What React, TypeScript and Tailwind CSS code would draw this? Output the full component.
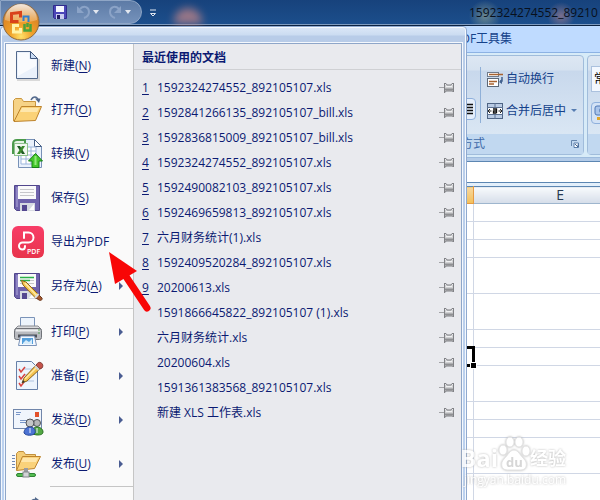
import React from 'react'

interface MenuItem {
  label: string
  accessKey?: string
  icon: React.ReactNode
  hasSubmenu?: boolean
  separated?: boolean
}

interface RecentFile {
  index?: string
  name: string
}

const NewIcon = () => (
  <svg className="h-8 w-8 shrink-0" viewBox="0 0 32 32">
    <path d="M5 30h22V9" fill="none" stroke="#d9d9d9" strokeWidth="2" />
    <path d="M4.500 1.500h14l7 7v20h-21z" fill="#eaf1fb" stroke="#53698c" />
    <path d="M18.500 1.500v7h7z" fill="#c9dbf3" stroke="#3f567c" />
    <path d="M6 3h11v6l7 1v6L6 26z" fill="#fff" opacity=".7" />
  </svg>
)

const OpenIcon = () => (
  <svg className="h-8 w-8 shrink-0" viewBox="0 0 32 32">
    <path d="M1.500 27V6.500l2-2h6l2 3h12v5" fill="#f6d387" stroke="#c9963f" />
    <path d="M2 27.500L9.500 12.500h20L23.500 26.500z" fill="#fbd277" stroke="#bd832c" />
    <path d="M10 14h17l-2 4H8z" fill="#fee7ad" />
    <path d="M19 6c2-4 6-4 7 0" fill="none" stroke="#53698c" strokeWidth="1.500" />
    <path d="M23 4.500h5.500L27 9z" fill="#53698c" />
  </svg>
)

const ConvertIcon = () => (
  <svg className="h-8 w-8 shrink-0" viewBox="0 0 32 32">
    <path d="M6.500 1.500h16l7 7v21h-23z" fill="#e9f1fc" stroke="#7791b7" />
    <path d="M22.500 1.500v7h7z" fill="#fff" stroke="#465f87" />
    <path d="M9 9h15v17H9zM9 13h15M9 17h15M9 21h15M14 9v17M19 9v17" fill="#fff" stroke="#9db6dc" />
    <path d="M1 16V6c0-3 2-4 4-4h8v4" fill="#e6f3e5" stroke="#4b9a4b" strokeWidth="2" />
    <rect x="2.500" y="5.500" width="13" height="12" fill="#f2f8f0" stroke="#8fc18d" />
    <path d="M5 8h3l5 8h-3z" fill="#1f5d24" />
    <path d="M13 8h-3l-5 8h3z" fill="#3b8a2c" />
    <path d="M23.500 15.500l7 7.500h-3.500v6.500h-7V23h-3.500z" fill="#44c72b" stroke="#178015" />
    <path d="M23.500 18v9" stroke="#91e97a" strokeWidth="2" />
  </svg>
)

const DiskShape = () => (
  <>
    <path d="M2.500 3.500h25v25h-23l-2-2z" fill="#6f63ac" stroke="#51468c" />
    <path d="M5 5v20" stroke="#9087c4" strokeWidth="2" />
    <rect x="6" y="4" width="18" height="13" fill="#fafafa" />
    <path d="M8 7.500h14M8 10.500h14M8 13.500h14" stroke="#c7c7cb" />
    <path d="M8 29v-8h15v8z" fill="#d7dae2" />
    <path d="M10 29v-6h5v6z" fill="#544790" />
    <path d="M17 28l5-6v6z" fill="#fff" />
  </>
)

const SaveIcon = () => (
  <svg className="h-8 w-8 shrink-0" viewBox="0 0 32 32">
    <DiskShape />
  </svg>
)

const SaveAsIcon = () => (
  <svg className="h-8 w-8 shrink-0" viewBox="0 0 32 32">
    <DiskShape />
    <path d="M8 7.500h14M8 10.500h10" stroke="#2bb04a" strokeWidth="1.500" />
    <path d="M9.500 10.500l4.500 1.500 13 13-3 3.500L11 15z" fill="#f3c54f" stroke="#8f6519" />
    <path d="M13 13l12 13" stroke="#fdebaa" strokeWidth="1.500" />
    <path d="M27 25l3 3c1 2-2 3-3 2l-3-2z" fill="#a3572e" stroke="#6e3b1f" />
    <path d="M26.500 24L23 28" stroke="#ddd" strokeWidth="2" />
  </svg>
)

const PdfIcon = () => (
  <svg className="h-8 w-8 shrink-0" viewBox="0 0 32 32">
    <defs>
      <linearGradient id="pdfFill" x1="0" y1="0" x2="0" y2="1">
        <stop offset="0" stopColor="#f83d68" />
        <stop offset="1" stopColor="#e8344b" />
      </linearGradient>
    </defs>
    <rect width="32" height="32" rx="6" fill="url(#pdfFill)" />
    <path
      d="M12 12V6.500h4.500a5 5 0 0 1 0 10H10.500a3.500 3.500 0 0 0 0 7c2 0 2.500-1.500 2.500-3.500"
      fill="none"
      stroke="#fff"
      strokeWidth="2"
      strokeLinecap="round"
    />
    <text x="15" y="28" fill="#fff" fontSize="7" fontWeight="600" fontFamily="Open Sans, sans-serif">PDF</text>
  </svg>
)

const PrintIcon = () => (
  <svg className="h-8 w-8 shrink-0" viewBox="0 0 32 32">
    <path d="M8.500 13V1.500h14V13" fill="#edf4fc" stroke="#7a93b8" />
    <path d="M3 13l3-3h20l3 3z" fill="#d9dadd" stroke="#8a8c92" />
    <rect x="2.500" y="12.500" width="27" height="11" rx="2" fill="#b9bbc0" stroke="#6f7278" />
    <path d="M4 14.500h24" stroke="#eeeff1" strokeWidth="2" />
    <path d="M6 20h19" stroke="#4d5057" strokeWidth="3" />
    <path d="M26 14h2M26 17h2" stroke="#56a356" />
    <path d="M8.500 20h14l2 9.500h-18z" fill="#f3f8ff" stroke="#7a93b8" />
    <rect x="10" y="22" width="11" height="6" fill="#54a0dd" />
    <path d="M11 27l3-3 3 2 3-3v5h-9z" fill="#d6ecfb" />
  </svg>
)

const PrepareIcon = () => (
  <svg className="h-8 w-8 shrink-0" viewBox="0 0 32 32">
    <path d="M4.500 1.500h15l6 6v22h-21z" fill="#edf4fc" stroke="#6680a8" />
    <path d="M12 9h10M13 15h9M13 21h9" stroke="#afc3df" />
    <path d="M7 9l2 3 4-5M7 16l2 3 4-5M7 23l2 3 3-4" fill="none" stroke="#d8433e" strokeWidth="1.500" />
    <path d="M10 23l2-5L25 4l4 4-14 13z" fill="#f5c451" stroke="#8d641b" />
    <path d="M13 19L26 6" stroke="#ffe9a5" strokeWidth="1.500" />
    <path d="M25 4c2-4 8 0 5 4l-2 1-4-4z" fill="#c5534b" stroke="#84403a" />
    <path d="M23 6l4 4" stroke="#cfd2d6" strokeWidth="2" />
    <path d="M10 23l1-3 2 2z" fill="#333" />
  </svg>
)

const SendIcon = () => (
  <svg className="h-8 w-8 shrink-0" viewBox="0 0 32 32">
    <rect x="1.500" y="5.500" width="28" height="19" fill="#f0f5fc" stroke="#7186aa" />
    <path d="M4 8.500h5M4 10.500h4M8 16.500h8M8 18.500h6" stroke="#7996c8" />
    <rect x="23" y="8" width="4" height="5" fill="#e2512b" />
    <circle cx="25" cy="19" r="3.500" fill="#b5b6b8" stroke="#505358" />
    <path d="M20 30c0-5 2-7 5-7s6 2 6 5-4 3-6 3z" fill="#53a843" stroke="#2c7425" />
    <circle cx="18" cy="19" r="4" fill="#c5c6c8" stroke="#505358" />
    <path d="M12 29c0-4 3-6 6-6s6 2 5 6c-2 3-9 3-11 0z" fill="#4c73d3" stroke="#274799" />
    <path d="M18 24v5M25 24v5" stroke="#eef3ff" />
  </svg>
)

const PublishIcon = () => (
  <svg className="h-8 w-8 shrink-0" viewBox="0 0 32 32">
    <path d="M0 7.500h3M0 10.500h3M0 13.500h3M0 16.500h3M0 19.500h3" stroke="#7188b4" />
    <path d="M4.500 22V5.500l2-2h5l2 3h10v4" fill="#f4cd78" stroke="#c2903d" />
    <path d="M4.500 22.500l6-14h18l-6 12z" fill="#fad27a" stroke="#bd832c" />
    <path d="M11 10h15l-2 4H9z" fill="#ffe6aa" />
    <path d="M14 20v6" stroke="#989ba0" strokeWidth="4" />
    <rect x="4.500" y="25.500" width="19" height="3" rx="1.500" fill="#52bd4f" stroke="#318336" />
    <rect x="11" y="24" width="6" height="5" fill="#d2d4d7" stroke="#84878c" />
  </svg>
)

const CloseIcon = () => (
  <svg className="h-8 w-8 shrink-0" viewBox="0 0 32 32">
    <path d="M19 10c0-3 2-5 5-4" fill="none" stroke="#53698c" strokeWidth="2" />
    <path d="M23 3l4 3-4 4z" fill="#53698c" />
    <path d="M3 14h18v14H3z" fill="#f6d387" stroke="#c9963f" />
  </svg>
)

const PinIcon = () => (
  <svg className="h-3 w-4" viewBox="0 0 16 12">
    <path d="M0 5.500h5" stroke="#a2a3a6" />
    <rect x="6" y="3" width="8" height="6" fill="#cfd0d2" />
    <path d="M7 4.500h6" stroke="#f1f1f2" />
    <path d="M6 7.500h8" stroke="#8f9093" strokeWidth="2" />
    <path d="M5.500 1v10M14.500 1v9" stroke="#808185" />
    <path d="M6 1.500h1l1 1.500h4l1-1.500h1M6 10.500l1-1.500h6l1 .500" fill="none" stroke="#808185" />
  </svg>
)

const DropArrow = () => (
  <svg className="h-1 w-1.5 shrink-0" viewBox="0 0 6 4"><path d="M0 0h6L3 4z" fill="#e2e7ef" /></svg>
)

const menuItems: MenuItem[] = [
  { label: '新建', accessKey: 'N', icon: <NewIcon /> },
  { label: '打开', accessKey: 'O', icon: <OpenIcon /> },
  { label: '转换', accessKey: 'V', icon: <ConvertIcon /> },
  { label: '保存', accessKey: 'S', icon: <SaveIcon /> },
  { label: '导出为PDF', icon: <PdfIcon /> },
  { label: '另存为', accessKey: 'A', icon: <SaveAsIcon />, hasSubmenu: true },
  { label: '打印', accessKey: 'P', icon: <PrintIcon />, hasSubmenu: true, separated: true },
  { label: '准备', accessKey: 'E', icon: <PrepareIcon />, hasSubmenu: true },
  { label: '发送', accessKey: 'D', icon: <SendIcon />, hasSubmenu: true },
  { label: '发布', accessKey: 'U', icon: <PublishIcon />, hasSubmenu: true }
]

const recentFiles: RecentFile[] = [
  { index: '1', name: '1592324274552_892105107.xls' },
  { index: '2', name: '1592841266135_892105107_bill.xls' },
  { index: '3', name: '1592836815009_892105107_bill.xls' },
  { index: '4', name: '1592324274552_892105107.xls' },
  { index: '5', name: '1592490082103_892105107.xls' },
  { index: '6', name: '1592469659813_892105107.xls' },
  { index: '7', name: '六月财务统计(1).xls' },
  { index: '8', name: '1592409520284_892105107.xls' },
  { index: '9', name: '20200613.xls' },
  { name: '1591866645822_892105107 (1).xls' },
  { name: '六月财务统计.xls' },
  { name: '20200604.xls' },
  { name: '1591361383568_892105107.xls' },
  { name: '新建 XLS 工作表.xls' }
]

const sheetRows = [
  { id: 1, tall: false },
  { id: 2, tall: false },
  { id: 3, tall: false },
  { id: 4, tall: true },
  { id: 5, tall: true },
  { id: 6, tall: false },
  { id: 7, tall: false, active: true },
  { id: 8, tall: true },
  { id: 9, tall: false },
  { id: 10, tall: false },
  { id: 11, tall: true },
  { id: 12, tall: true }
]

const TitleBar = () => (
  <header className="flex h-[26px] shrink-0 items-start border-b border-[#0c2240] bg-linear-to-b from-[#17427c] to-[#1c4f8c] shadow-[inset_0_-1px_0_#7f9cc0]">
    <div className="flex h-6 w-[142px] items-center gap-2 rounded-r-full border border-[#8fa6c6] bg-linear-to-b from-[#5d7ba6] to-[#7592bb] pl-[51px]">
      <button aria-label="保存" className="h-4 w-4">
        <svg className="h-4 w-4" viewBox="0 0 16 16">
          <path d="M1.500 1.500h13v13h-12l-1-1z" fill="#4b46b8" stroke="#302b8c" />
          <path d="M4 2h8v6H4z" fill="#f4f6ff" />
          <path d="M4 10h8v5H4z" fill="#c9cdf0" />
          <path d="M5 11h3v4H5z" fill="#221d66" />
        </svg>
      </button>
      <button aria-label="撤消" className="flex h-4 w-6 items-center gap-px">
        <svg className="h-4 w-4 shrink-0" viewBox="0 0 16 16">
          <path d="M4 5c4-4 9-2 9 3 0 3-2 5-5 6" fill="none" stroke="#8ba3c7" strokeWidth="2" />
          <path d="M1 2v7h7z" fill="#8ba3c7" />
        </svg>
        <DropArrow />
      </button>
      <button aria-label="恢复" className="flex h-4 w-6 items-center gap-px">
        <svg className="h-4 w-4 shrink-0" viewBox="0 0 16 16">
          <path d="M11 5C7 1 2 3 2 8c0 3 2 5 5 6" fill="none" stroke="#8ba3c7" strokeWidth="2" />
          <path d="M13 2v7H6z" fill="#8ba3c7" />
        </svg>
        <DropArrow />
      </button>
    </div>
    <button aria-label="自定义快速访问工具栏" className="ml-2 flex h-[26px] w-4 items-center">
      <svg className="h-2 w-1.5" viewBox="0 0 6 8"><path d="M0 1h6M.500 4.500h5L3 7z" fill="none" stroke="#dfe6f0" /></svg>
    </button>
    <div className="mt-2 ml-2 h-4 w-7 rounded-t-full bg-[#d08a88] opacity-70 blur-xs" />
    <h1 className="ml-auto w-[131px] shrink-0 bg-[radial-gradient(circle_at_16px_16px,#8fa394aa,transparent_16px),radial-gradient(circle_at_92px_16px,#a8808faa,transparent_14px)] pt-1 pb-0.5 leading-[18px] whitespace-nowrap text-[#08101c]">
      1592324274552_89210
    </h1>
  </header>
)

const Ribbon = () => (
  <section className="shrink-0">
    <nav className="flex h-[27px] items-center border-b border-[#8db2e3] bg-[#bfdbff] pl-[454px]">
      <a href="#pdf-tools" className="whitespace-nowrap text-[#15428b]">PDF工具集</a>
    </nav>
    <div className="flex h-[105px] gap-[3px] overflow-hidden border-b border-[#9dbbdd] bg-[#d7ebf8] pt-0.5 pb-0.5">
      <div className="flex w-[584px] shrink-0 flex-col rounded-sm border border-[#a0bcdb] bg-[linear-gradient(#dde7f3,#d6e2f0_14px,#c8d8ec_15px,#dfebf6)]">
        <div className="flex flex-1 items-center justify-end pr-[6px]">
          <button aria-label="文本右对齐" className="mt-7 flex h-[22px] w-[22px] items-center justify-end rounded-sm border border-[#8fb0dc] bg-[#e4eefb] pr-0.5">
            <svg className="h-3 w-4" viewBox="0 0 16 12"><path d="M2 1.500h14M6 4.500h10M2 7.500h14M6 10.500h10" stroke="#111" strokeWidth="1.500" /></svg>
          </button>
          <div className="ml-1 h-14 w-px bg-[#8fb0d8]" />
          <div className="ml-1.5 flex flex-col gap-2">
            <button className="flex h-6 items-center gap-[3px] text-[#15428b]">
              <svg className="h-4 w-4" viewBox="0 0 16 16">
                <rect x=".5" y="1.500" width="11" height="4" fill="#fff" stroke="#707b8b" />
                <path d="M2 3.500h14" stroke="#a86330" strokeWidth="1.500" />
                <rect x=".5" y="7.500" width="11" height="8" fill="#fff" stroke="#5c6878" />
                <path d="M2 10.500h8M2 13h5" stroke="#a86330" strokeWidth="1.500" />
                <path d="M15 6v4h-2" fill="none" stroke="#42628f" strokeWidth="1.500" />
                <path d="M15 8v5l-3-2z" fill="#42628f" />
              </svg>
              自动换行
            </button>
            <button className="flex h-6 items-center gap-[3px] text-[#15428b]">
              <svg className="h-4 w-4" viewBox="0 0 16 16">
                <rect x=".5" y=".5" width="15" height="15" fill="#b9cbe4" stroke="#4f6585" />
                <path d="M8 0v4M8 12v4M0 4.500h16M0 11.500h16" stroke="#5c7293" />
                <rect x="1" y="5" width="14" height="6" fill="#fff" />
                <path d="M1 8h3.500M11.500 8H15M3 6L1 8l2 2M13 6l2 2-2 2" fill="none" stroke="#222" />
                <path d="M6 6h3.500v4M9.500 8h-3v2h3" fill="none" stroke="#111" strokeWidth="1.300" />
              </svg>
              合并后居中
              <svg className="ml-0.5 h-1 w-1.5" viewBox="0 0 6 4"><path d="M0 0h6L3 3z" fill="#567db1" /></svg>
            </button>
          </div>
        </div>
        <div className="flex h-5 items-center justify-end gap-[86px] bg-[#c1d8f0] pr-1">
          <span className="text-[#3e6aaa]">对齐方式</span>
          <button aria-label="对齐方式设置">
            <svg className="h-2 w-2" viewBox="0 0 8 8">
              <path d="M.5 6V.5H6" fill="none" stroke="#6686ac" />
              <path d="M3 3h4.500v4.500H3z" fill="#fff" stroke="#5a7da8" />
              <path d="M4 4l3 3V4.500" fill="none" stroke="#426796" />
            </svg>
          </button>
        </div>
      </div>
      <div className="flex w-40 shrink-0 flex-col rounded-sm border border-[#a0bcdb] bg-[linear-gradient(#dde7f3,#d6e2f0_14px,#c8d8ec_15px,#dfebf6)]">
        <div className="flex flex-1 flex-col gap-2.5 pt-2.5 pl-[3px]">
          <select aria-label="数字格式" className="h-[26px] w-32 shrink-0 appearance-none border border-[#abc1de] bg-[#f3f8ff] pl-0.5 text-black">
            <option>常规</option>
          </select>
          <button aria-label="会计数字格式" className="h-[22px] w-9 shrink-0 rounded-sm border border-[#8fb0dc] bg-[#d3e2f5] pl-0.5">
            <svg className="h-4 w-4" viewBox="0 0 16 16">
              <rect x="1" y="1" width="14" height="9" rx="2" fill="#a9c4ea" stroke="#4e76b4" />
              <circle cx="8" cy="5.500" r="2.500" fill="#e9f1fc" stroke="#4e76b4" />
              <path d="M3 13.500h11" stroke="#e2a526" strokeWidth="3" />
            </svg>
          </button>
        </div>
        <div className="h-5 bg-[#c1d8f0]" />
      </div>
    </div>
  </section>
)

const Sheet = () => (
  <section className="flex-1 overflow-hidden bg-white">
    <div className="h-[3px] bg-[#b3cbe8]" />
    <input aria-label="编辑栏" className="block h-[22px] w-full border-y border-[#5c86b2] bg-white pl-[480px] outline-none" />
    <div className="h-[3px] bg-[#e3effb]" />
    <table className="w-[647px] table-fixed border-collapse">
      <colgroup>
        <col className="w-[473px]" />
        <col />
      </colgroup>
      <thead>
        <tr className="h-[17px]">
          <th aria-label="D" className="border-t border-r border-b border-t-[#5c86b2] border-r-[#e59a43] border-b-[#e59a43] bg-linear-to-b from-[#f8d79c] to-[#f2bf58] p-0" />
          <th className="border-t border-b border-t-[#5c86b2] border-b-[#9eb6ce] bg-linear-to-b from-[#f8fafc] to-[#d5dde9] p-0 text-sm leading-4 font-normal text-[#25384f]">E</th>
        </tr>
      </thead>
      <tbody>
        {sheetRows.map(row => (
          <tr key={row.id} className={row.tall ? 'h-9' : 'h-[18px]'}>
            <td className="relative border-r border-b border-[#d0d7e5] p-0">
              {row.active && (
                <>
                  <div className="absolute -inset-y-0.5 -right-0.5 left-0 border-[3px] border-black" />
                  <div className="absolute -right-[3px] -bottom-[3px] h-[5px] w-[5px] bg-black outline outline-white" />
                </>
              )}
            </td>
            <td className="border-b border-[#d0d7e5] p-0" />
          </tr>
        ))}
      </tbody>
    </table>
  </section>
)

const OfficeMenu = () => (
  <div className="absolute top-[26px] left-0 w-[467px] rounded-t-sm border border-[#8fa9cf] bg-[linear-gradient(#dce8f7,#cbdcf1_8px,#b8cce8_9px,#bcd2f0)] p-1 pt-4 shadow-[inset_0_0_0_1px_#f4f8fd]">
    <div className="flex border border-[#8ea6c9] bg-[#fafafa] outline outline-[#f4f8fd]">
      <nav className="w-32 shrink-0 border-r border-[#c5c5c5]">
        {menuItems.map(item => (
          <React.Fragment key={item.label}>
            {item.separated && <hr className="mb-px ml-auto w-[83px] border-[#c5c5c5]" />}
            <button className="flex h-11 w-full items-center pr-[10px] pl-[6px] text-left">
              {item.icon}
              <span className="ml-[7px] flex-1 whitespace-nowrap">
                {item.label}
                {item.accessKey && <>(<span className="underline underline-offset-2">{item.accessKey}</span>)</>}
              </span>
              {item.hasSubmenu && (
                <svg className="h-2 w-1" viewBox="0 0 4 8"><path d="M0 0l4 4-4 4z" fill="#4a5d92" /></svg>
              )}
            </button>
          </React.Fragment>
        ))}
        <hr className="mb-px ml-auto w-[83px] border-[#c5c5c5]" />
        <div className="flex h-11 items-center pl-[6px]">
          <CloseIcon />
        </div>
      </nav>
      <section className="flex-1 bg-[#e9eaee]">
        <h2 className="h-[26px] border-b border-[#cfd0d3] pt-0.5 pl-2 leading-6 font-bold">最近使用的文档</h2>
        <ul className="pt-[5px]">
          {recentFiles.map((file, i) => (
            <li key={i} className="flex h-[25px] items-center pr-[6px] pl-2">
              <span className="w-[15px] underline underline-offset-2">{file.index}</span>
              <a href="#recent" className="flex-1 whitespace-nowrap">{file.name}</a>
              <button aria-label="固定"><PinIcon /></button>
            </li>
          ))}
        </ul>
      </section>
    </div>
  </div>
)

const OfficeButton = () => (
  <button aria-label="Office 按钮" className="absolute top-[3px] left-[2px] h-[38px] w-[38px]">
    <svg className="h-full w-full" viewBox="0 0 38 38">
      <defs>
        <radialGradient id="orb" cx=".5" cy=".9" r=".85">
          <stop offset="0" stopColor="#ffe169" />
          <stop offset=".35" stopColor="#f0a22a" />
          <stop offset=".7" stopColor="#e08a25" />
          <stop offset="1" stopColor="#c98f58" />
        </radialGradient>
        <linearGradient id="gloss" x1="0" y1="0" x2="0" y2="1">
          <stop offset="0" stopColor="#fff" stopOpacity=".8" />
          <stop offset="1" stopColor="#ffe2b8" stopOpacity=".3" />
        </linearGradient>
      </defs>
      <circle cx="19" cy="19" r="18" fill="url(#orb)" stroke="#8b6a44" />
      <path d="M3 17a16 16 0 0 1 32 0c-8 3-24 3-32 0z" fill="url(#gloss)" />
      <path d="M16.500 18.500h-7v-8l9-1v5" fill="none" stroke="#d9421a" strokeWidth="3" />
      <path d="M21.500 18v-4.500h5V19" fill="none" stroke="#2f7fd0" strokeWidth="2" />
      <path d="M17 22.500h-5.500v6.500h7v-4" fill="none" stroke="#fff3a8" strokeWidth="3" />
      <path d="M22.500 21v6.500h6V21M25.500 20v4" fill="none" stroke="#4ca13a" strokeWidth="2.500" />
    </svg>
  </button>
)

const Watermark = () => (
  <div aria-hidden="true" className="absolute right-[34px] bottom-3 flex flex-col text-white opacity-80 drop-shadow-[0_0_1px_#aaa]">
    <div className="flex items-end text-2xl leading-7 font-bold">
      <span>Bai</span>
      <svg className="h-9 w-8" viewBox="0 0 32 36">
        <g fill="#fff" stroke="#ddd">
          <ellipse cx="5" cy="14" rx="4" ry="5" />
          <ellipse cx="12" cy="6" rx="4" ry="5" />
          <ellipse cx="21" cy="6" rx="4" ry="5" />
          <ellipse cx="28" cy="15" rx="4" ry="5" />
          <path d="M16 14c4 0 6 5 10 9s3 11-3 11H9c-6 0-7-7-3-11s6-9 10-9z" />
        </g>
        <text x="8" y="31" fontSize="13" fill="#ccc">du</text>
      </svg>
      <span className="text-lg leading-7">经验</span>
    </div>
    <span className="self-end text-xs leading-4">jingyan.baidu.com</span>
  </div>
)

const App: React.FC = () => {
  return (
    <div className="relative flex h-screen flex-col overflow-hidden bg-white font-['Open_Sans','Noto_Sans_CJK_SC',sans-serif] text-xs text-[#0b1a72]">
      <TitleBar />
      <Ribbon />
      <Sheet />
      <OfficeMenu />
      <OfficeButton />
      <svg className="pointer-events-none absolute top-[252px] left-[108px] h-[62px] w-11" viewBox="0 0 44 62">
        <path d="M17 23l22 33" stroke="#f80606" strokeWidth="7" strokeLinecap="round" />
        <path d="M1 0l28 19-22 13z" fill="#f80606" />
      </svg>
      <Watermark />
    </div>
  )
}

export default App
